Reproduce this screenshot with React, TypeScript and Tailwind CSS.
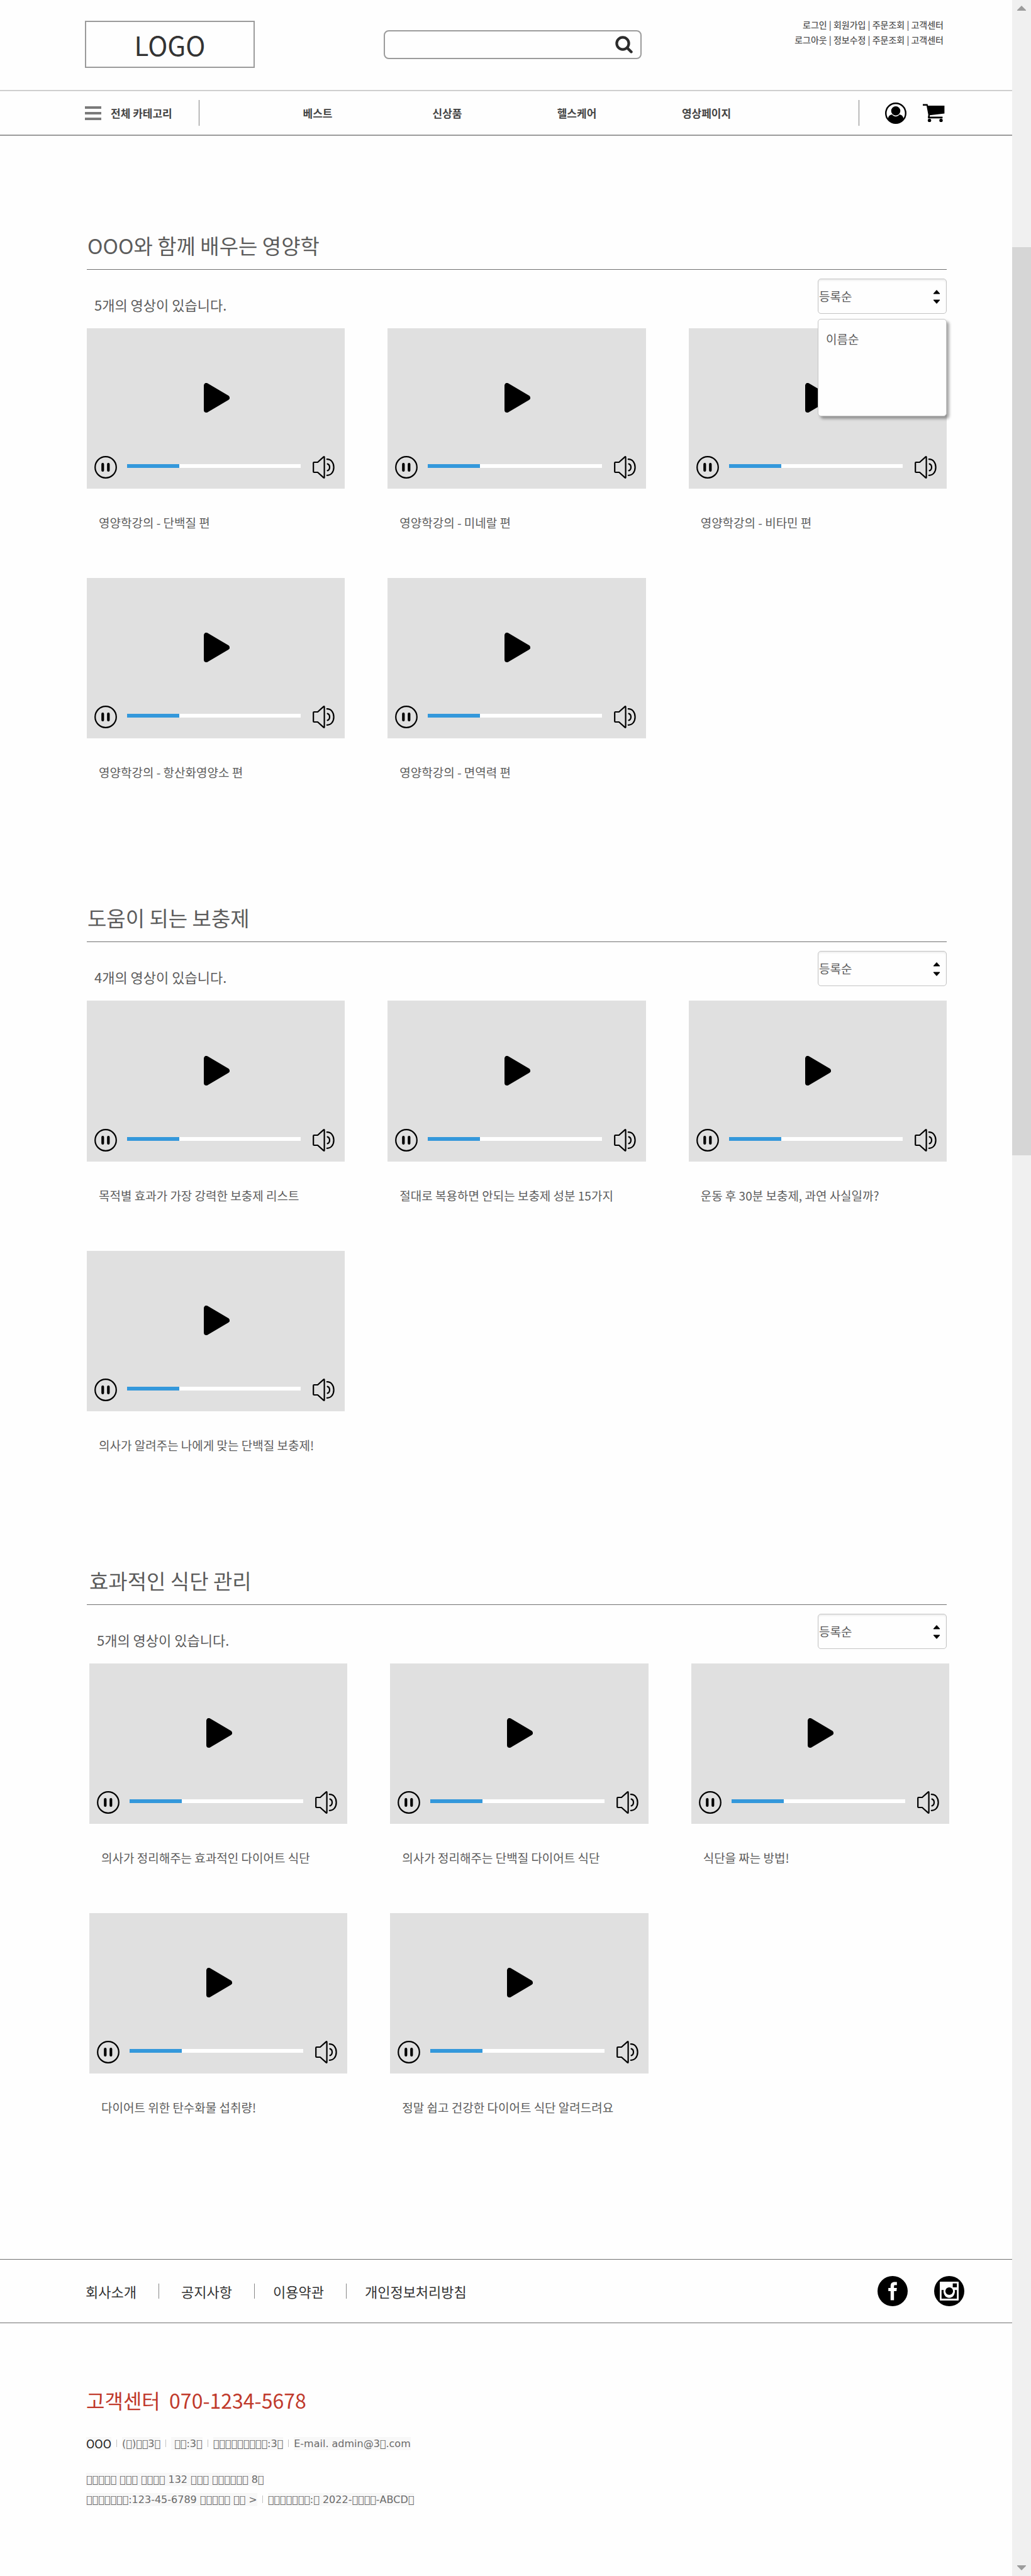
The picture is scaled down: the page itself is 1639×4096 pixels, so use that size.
import React from 'react';

// A code point without a glyph, drawn as the font's empty box.
const box = (n: number) => '\uF8F0'.repeat(n);

type Section = {
  id: string;
  title: string;
  count: string;
  menuOpen?: boolean;
  spacing: string;
  titlePad: string;
  countPad: string;
  indent: string;
  videos: string[];
};

const sections: Section[] = [
  {
    id: 'nutrition',
    title: 'OOO와 함께 배우는 영양학',
    count: '5개의 영상이 있습니다.',
    menuOpen: true,
    spacing: 'mt-[150px]',
    titlePad: 'pl-px',
    countPad: 'pl-3',
    indent: '',
    videos: [
      '영양학강의 - 단백질 편',
      '영양학강의 - 미네랄 편',
      '영양학강의 - 비타민 편',
      '영양학강의 - 항산화영양소 편',
      '영양학강의 - 면역력 편',
    ],
  },
  {
    id: 'supplements',
    title: '도움이 되는 보충제',
    count: '4개의 영상이 있습니다.',
    spacing: 'mt-[193px]',
    titlePad: 'pl-px',
    countPad: 'pl-3',
    indent: '',
    videos: [
      '목적별 효과가 가장 강력한 보충제 리스트',
      '절대로 복용하면 안되는 보충제 성분 15가지',
      '운동 후 30분 보충제, 과연 사실일까?',
      '의사가 알려주는 나에게 맞는 단백질 보충제!',
    ],
  },
  {
    id: 'diet',
    title: '효과적인 식단 관리',
    count: '5개의 영상이 있습니다.',
    spacing: 'mt-[177px]',
    titlePad: 'pl-1',
    countPad: 'pl-4',
    indent: 'ml-1 -mr-1',
    videos: [
      '의사가 정리해주는 효과적인 다이어트 식단',
      '의사가 정리해주는 단백질 다이어트 식단',
      '식단을 짜는 방법!',
      '다이어트 위한 탄수화물 섭취량!',
      '정말 쉽고 건강한 다이어트 식단 알려드려요',
    ],
  },
];

function PlayIcon() {
  return (
    <svg width="41" height="47" viewBox="0 0 41 47" aria-hidden="true">
      <path d="M4 4V43L37 23.5Z" stroke="#000" strokeWidth="8" strokeLinejoin="round" />
    </svg>
  );
}

function PauseIcon() {
  return (
    <svg width="36" height="36" viewBox="0 0 36 36" fill="none" aria-hidden="true">
      <circle cx="18" cy="18" r="16.8" stroke="#000" strokeWidth="2.2" />
      <path d="M13.3 13V23M22.3 13V23" stroke="#000" strokeWidth="4.2" strokeLinecap="round" />
    </svg>
  );
}

function SpeakerIcon() {
  return (
    <svg width="35" height="36" viewBox="0 0 35 36" fill="none" stroke="#000" strokeWidth="2.2" strokeLinecap="round" strokeLinejoin="round" aria-hidden="true">
      <path d="M2.2 10H8L17.6 1.4Q18.6 0.8 18.6 2V34Q18.6 35.2 17.6 34.6L8 26H2.2Q1.2 26 1.2 25V11Q1.2 10 2.2 10Z" />
      <path d="M22.8 5.2C29.5 5.2 33.6 10.6 33.6 18C33.6 25.4 29.5 30.8 22.8 30.8" />
      <path d="M23.6 12.6C25.8 13.4 27 15.6 27 18C27 20.4 25.8 22.6 23.6 23.4" />
    </svg>
  );
}

function SearchIcon() {
  return (
    <svg width="28" height="28" viewBox="0 0 28 28" fill="none" stroke="#2b2b2b" aria-hidden="true">
      <circle cx="12" cy="12" r="9.6" strokeWidth="4.2" />
      <path d="M19.5 19.5L25.5 25.5" strokeWidth="4.4" strokeLinecap="round" />
    </svg>
  );
}

function UserIcon() {
  return (
    <svg width="34" height="34" viewBox="0 0 34 34" aria-hidden="true">
      <circle cx="17" cy="17" r="15.8" fill="#fff" stroke="#000" strokeWidth="2.4" />
      <circle cx="17" cy="13.4" r="7.3" />
      <path d="M4.6 25C5.6 21.6 7.6 19.4 11 19C13 21.4 15 22.2 17 22.2S21 21.4 23 19C26.4 19.4 28.4 21.6 29.4 25C26.6 29.8 22.2 32.6 17 32.6S7.4 29.8 4.6 25Z" />
    </svg>
  );
}

function CartIcon() {
  return (
    <svg width="35" height="30" viewBox="0 0 35 30" aria-hidden="true">
      <path d="M0 0.4H7.6L8.2 3H34.4V15.6L11 18.2V20.6H31.4V23.2H8.2V20.6L8.8 18L6 3H0Z" />
      <circle cx="10.6" cy="26.4" r="2.7" />
      <circle cx="29" cy="26.4" r="2.7" />
    </svg>
  );
}

function FacebookIcon() {
  return (
    <svg width="48" height="48" viewBox="0 0 48 48" aria-hidden="true">
      <circle cx="24" cy="24" r="24" />
      <path d="M20.8 38.4V24H17.2V19H20.8V16.2C20.8 11.4 23 9.4 27.4 9.4H30.8V14.6H28.2C26.6 14.6 26.2 15.2 26.2 16.6V19H30.8L30.2 24H26.2V38.4Z" fill="#fff" />
    </svg>
  );
}

function InstagramIcon() {
  return (
    <svg width="48" height="48" viewBox="0 0 48 48" aria-hidden="true">
      <circle cx="24" cy="24" r="24" />
      <rect x="9" y="9" width="30" height="30" rx="0.8" fill="#fff" />
      <rect x="29.6" y="11.8" width="6.6" height="6.2" />
      <path d="M11.8 22.2H15.2A9 10.4 0 1 0 32.8 22.2H36.2V36H11.8Z" />
      <circle cx="24" cy="24" r="6.1" />
    </svg>
  );
}

function VideoCard({ title }: { title: string }) {
  return (
    <article>
      <div className="flex aspect-[410/255] flex-col bg-[#e0e0e0]">
        <div className="flex flex-1 items-center justify-center pt-[18px] pl-[2px]">
          <button type="button" aria-label={`${title} 재생`}>
            <PlayIcon />
          </button>
        </div>
        <div className="flex items-center pr-4 pb-4 pl-3">
          <button type="button" aria-label="일시정지" className="shrink-0">
            <PauseIcon />
          </button>
          <progress
            value={30}
            max={100}
            aria-label="재생 위치"
            className="mb-1 ml-4 h-[6px] min-w-0 flex-1 appearance-none bg-white [&::-webkit-progress-bar]:bg-white [&::-webkit-progress-value]:bg-[#3498db]"
          />
          <button type="button" aria-label="음량" className="ml-[19px] shrink-0">
            <SpeakerIcon />
          </button>
        </div>
      </div>
      <h3 className="mt-10 pl-[19px] text-[19px] leading-7">{title}</h3>
    </article>
  );
}

function SortSelect({ id, open }: { id: string; open?: boolean }) {
  return (
    <div className="relative mt-[14px] w-[205px]">
      <select
        id={`sort-${id}`}
        aria-label="정렬"
        defaultValue="등록순"
        className="h-14 w-full appearance-none rounded-[5px] border border-[#c4c4c4] bg-[#fefefe] px-px text-[19px] shadow-[inset_0_2px_3px_rgba(0,0,0,0.08)]"
      >
        <option>등록순</option>
        <option>이름순</option>
      </select>
      <svg width="12" height="24" viewBox="0 0 12 24" className="pointer-events-none absolute top-[17px] right-[10px]" aria-hidden="true">
        <path d="M6 1.5L11 7H1ZM6 22.5L11 17H1Z" stroke="#000" strokeWidth="1" strokeLinejoin="round" />
      </svg>
      {open && (
        <ul className="absolute top-16 left-0 h-[155px] w-full rounded-[5px] border border-[#c4c4c4] bg-[#fefefe] px-3 py-[17px] text-[19px] leading-7 shadow-[4px_4px_4px_rgba(0,0,0,0.35)]">
          <li>
            <button type="button">이름순</button>
          </li>
        </ul>
      )}
    </div>
  );
}

function Header() {
  return (
    <header className="text-[#444]">
      <div className="flex h-[145px] items-start border-b-2 border-[#cfcfcf] pr-[109px] pl-[135px]">
        <a href="#" className="mt-[33px] flex h-[75px] w-[270px] shrink-0 items-center justify-center border-2 border-[#9b9b9b] text-[42px] leading-none text-[#333]">
          LOGO
        </a>
        <form role="search" className="mt-12 mr-[243px] ml-[205px] flex h-[46px] min-w-0 flex-1 items-center rounded-lg border-2 border-[#9b9b9b] pr-3 pl-3">
          <input type="search" aria-label="검색" className="min-w-0 flex-1 bg-transparent text-lg outline-none" />
          <button type="button" aria-label="검색하기">
            <SearchIcon />
          </button>
        </form>
        <div className="mt-[27px] shrink-0 text-right text-[14px] leading-6 font-medium text-[#555]">
          <p>
            <a href="#">로그인</a> | <a href="#">회원가입</a> | <a href="#">주문조회</a> | <a href="#">고객센터</a>
          </p>
          <p>
            <a href="#">로그아웃</a> | <a href="#">정보수정</a> | <a href="#">주문조회</a> | <a href="#">고객센터</a>
          </p>
        </div>
      </div>
      <div className="flex h-[71px] items-center border-b-2 border-[#9b9b9b] pr-[107px] pl-[135px] text-[17px] font-bold">
        <button type="button" className="flex w-[181px] items-center gap-[15px]">
          <svg width="26" height="22" viewBox="0 0 26 22" fill="#7a7a7a" aria-hidden="true">
            <path d="M0 0H26V4H0ZM0 9H26V13H0ZM0 18H26V22H0Z" />
          </svg>
          전체 카테고리
        </button>
        <span className="h-[41px] w-px bg-[#808080]" />
        <nav className="mr-[139px] ml-[85px] grid flex-1 grid-cols-4 text-center">
          <a href="#">베스트</a>
          <a href="#">신상품</a>
          <a href="#">헬스케어</a>
          <a href="#">영상페이지</a>
        </nav>
        <span className="h-[41px] w-px bg-[#808080]" />
        <button type="button" aria-label="내 계정" className="ml-[41px]">
          <UserIcon />
        </button>
        <button type="button" aria-label="장바구니" className="ml-[26px]">
          <CartIcon />
        </button>
      </div>
    </header>
  );
}

function InfoDivider() {
  return <span className="mx-2 h-3 w-px bg-[#c4c4c4]" />;
}

function Info({ children }: { children: React.ReactNode }) {
  return <span className="bg-[#f8f8f8] leading-[21px] whitespace-pre">{children}</span>;
}

function InfoLine({ spacing, children }: { spacing: string; children: React.ReactNode }) {
  return (
    <div className={`flex h-6 items-center font-['DejaVu_Sans',sans-serif] text-base text-[#6a6a6a] ${spacing}`}>
      {children}
    </div>
  );
}

const footerLinks = [
  { text: '회사소개', pad: 'pr-[35px]' },
  { text: '공지사항', pad: 'pl-[35px] pr-[35px] border-l' },
  { text: '이용약관', pad: 'pl-[29px] pr-[35px] border-l' },
  { text: '개인정보처리방침', pad: 'pl-[29px] border-l' },
];

function Footer() {
  return (
    <footer className="mt-[227px]">
      <div className="flex h-[102px] items-center border-y border-[#707070] pr-[76px] pl-[136px]">
        <nav className="flex text-[22px] leading-6 text-[#333]">
          {footerLinks.map((link) => (
            <a key={link.text} href="#" className={`border-[#888] ${link.pad}`}>
              {link.text}
            </a>
          ))}
        </nav>
        <a href="#" aria-label="Facebook" className="ml-auto">
          <FacebookIcon />
        </a>
        <a href="#" aria-label="Instagram" className="ml-[42px]">
          <InstagramIcon />
        </a>
      </div>
      <div className="pl-[137px]">
        <p className="mt-[98px] text-[32px] leading-[48px] whitespace-pre text-[#c0392b]">고객센터{'  '}070-1234-5678</p>
        <InfoLine spacing="mt-[33px]">
          <span className="bg-[#f8f8f8] font-['Noto_Sans_CJK_KR',sans-serif] text-lg leading-[21px] text-[#222]">OOO</span>
          <InfoDivider />
          <Info>{`(${box(1)})${box(2)}3${box(1)}`}</Info>
          <InfoDivider />
          <Info>{` ${box(2)}:3${box(1)}`}</Info>
          <InfoDivider />
          <Info>{`${box(9)}:3${box(1)}`}</Info>
          <InfoDivider />
          <Info>{`E-mail. admin@3${box(1)}.com`}</Info>
        </InfoLine>
        <InfoLine spacing="mt-[33px]">
          <Info>{`${box(5)} ${box(3)} ${box(4)} 132 ${box(3)} ${box(6)} 8${box(1)}`}</Info>
        </InfoLine>
        <InfoLine spacing="mt-2">
          <Info>{`${box(7)}:123-45-6789 ${box(5)} ${box(2)} >`}</Info>
          <InfoDivider />
          <Info>{`${box(7)}:${box(1)} 2022-${box(4)}-ABCD${box(1)}`}</Info>
        </InfoLine>
      </div>
    </footer>
  );
}

function ScrollRail() {
  return (
    <div className="relative w-[30px] shrink-0 bg-[#f0f0f0]" aria-hidden="true">
      <svg width="14" height="8" viewBox="0 0 14 8" fill="#9c9c9c" className="absolute top-[9px] left-2">
        <path d="M7 0L14 7V8H0V7Z" />
      </svg>
      <div className="absolute top-[393px] h-[1444px] w-full bg-[#d6d6d6]" />
      <svg width="14" height="8" viewBox="0 0 14 8" fill="#9c9c9c" className="absolute bottom-[9px] left-2">
        <path d="M7 8L14 1V0H0V1Z" />
      </svg>
    </div>
  );
}

export default function App() {
  return (
    <div className="flex min-h-screen bg-[#fefefe] font-['Noto_Sans_CJK_KR',sans-serif] text-[#5c5c5c]">
      <div className="min-w-0 flex-1">
        <Header />
        <main className="pr-[104px] pl-[138px]">
          {sections.map((s) => (
            <section key={s.id} className={s.spacing}>
              <h2 className={`border-b border-[#707070] pb-[14px] text-[33px] leading-[48px] ${s.titlePad}`}>{s.title}</h2>
              <div className="flex h-[93px] items-start justify-between">
                <p className={`mt-[39px] text-[22px] leading-8 ${s.countPad}`}>{s.count}</p>
                <SortSelect id={s.id} open={s.menuOpen} />
              </div>
              <div className={`grid grid-cols-3 gap-x-[68px] gap-y-[74px] ${s.indent}`}>
                {s.videos.map((v) => (
                  <VideoCard key={v} title={v} />
                ))}
              </div>
            </section>
          ))}
        </main>
        <Footer />
      </div>
      <ScrollRail />
    </div>
  );
}
